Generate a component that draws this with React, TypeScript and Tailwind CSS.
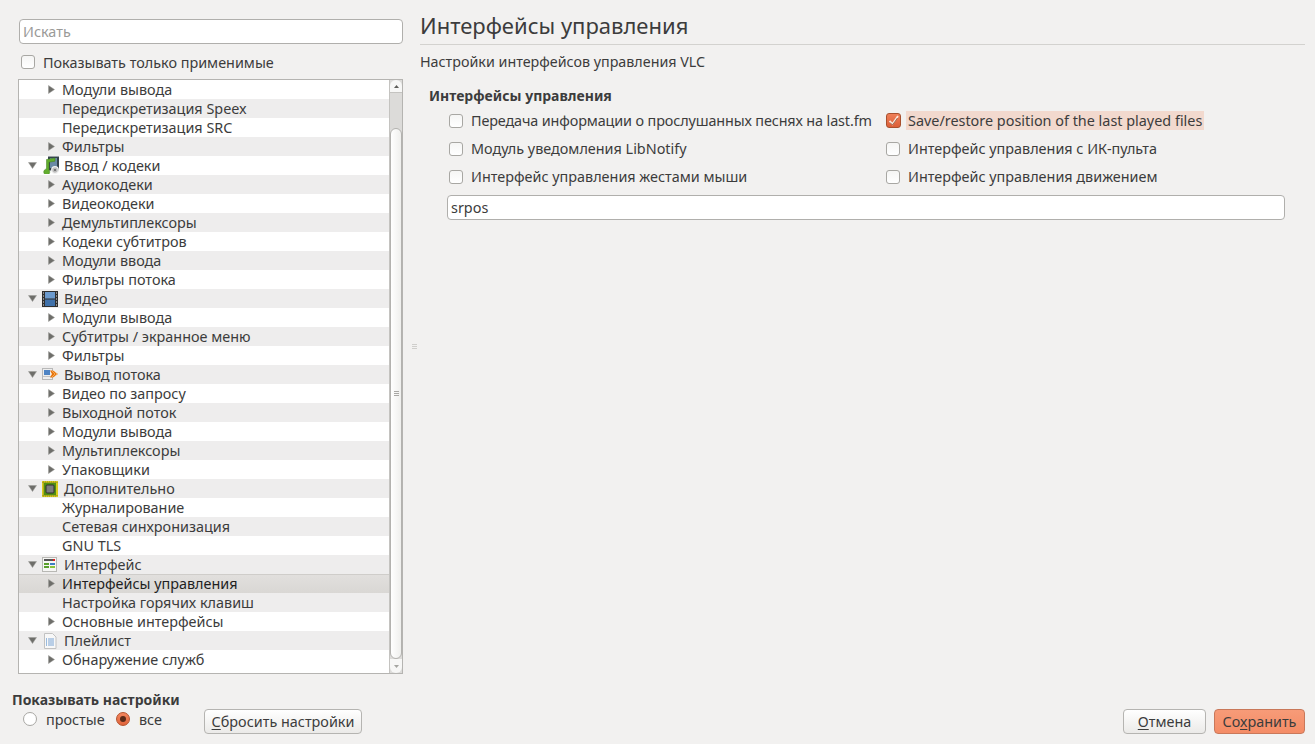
import type { ReactNode } from 'react';

type Row = { label: string; kind: 'top' | 'branch' | 'leaf'; icon?: string; selected?: boolean };

const ROWS: Row[] = [
  { label: 'Модули вывода', kind: 'branch' },
  { label: 'Передискретизация Speex', kind: 'leaf' },
  { label: 'Передискретизация SRC', kind: 'leaf' },
  { label: 'Фильтры', kind: 'branch' },
  { label: 'Ввод / кодеки', kind: 'top', icon: 'codec' },
  { label: 'Аудиокодеки', kind: 'branch' },
  { label: 'Видеокодеки', kind: 'branch' },
  { label: 'Демультиплексоры', kind: 'branch' },
  { label: 'Кодеки субтитров', kind: 'branch' },
  { label: 'Модули ввода', kind: 'branch' },
  { label: 'Фильтры потока', kind: 'branch' },
  { label: 'Видео', kind: 'top', icon: 'video' },
  { label: 'Модули вывода', kind: 'branch' },
  { label: 'Субтитры / экранное меню', kind: 'branch' },
  { label: 'Фильтры', kind: 'branch' },
  { label: 'Вывод потока', kind: 'top', icon: 'stream' },
  { label: 'Видео по запросу', kind: 'branch' },
  { label: 'Выходной поток', kind: 'branch' },
  { label: 'Модули вывода', kind: 'branch' },
  { label: 'Мультиплексоры', kind: 'branch' },
  { label: 'Упаковщики', kind: 'branch' },
  { label: 'Дополнительно', kind: 'top', icon: 'chip' },
  { label: 'Журналирование', kind: 'leaf' },
  { label: 'Сетевая синхронизация', kind: 'leaf' },
  { label: 'GNU TLS', kind: 'leaf' },
  { label: 'Интерфейс', kind: 'top', icon: 'iface' },
  { label: 'Интерфейсы управления', kind: 'branch', selected: true },
  { label: 'Настройка горячих клавиш', kind: 'leaf' },
  { label: 'Основные интерфейсы', kind: 'branch' },
  { label: 'Плейлист', kind: 'top', icon: 'playlist' },
  { label: 'Обнаружение служб', kind: 'branch' },
];

function CategoryIcon({ name }: { name: string }) {
  if (name === 'codec') {
    return (
      <svg width="18" height="18" viewBox="0 0 18 18" className="-mt-px">
        <rect x="6" y="0.500" width="11" height="14" fill="#35424c" />
        <rect x="8" y="2" width="7" height="10" fill="#6a8aa6" />
        <path d="M4.500 13V3.500L13 2v3.200L7 6.200V14a3 3 0 1 1-2.500-1z" fill="#62ad2e" stroke="#3f7f1a" strokeWidth="0.500" />
        <circle cx="13" cy="14" r="3.300" fill="#bdbdbd" stroke="#f1f1f1" strokeWidth="1.200" />
        <circle cx="13" cy="14" r="1.100" fill="#666" />
      </svg>
    );
  }
  if (name === 'video') {
    return (
      <svg width="16" height="16" viewBox="0 0 16 16">
        <rect x="0" y="0" width="16" height="16" fill="#2f2f2f" />
        <rect x="3" y="1" width="10" height="6.500" fill="#6b9ace" />
        <rect x="3" y="8.500" width="10" height="6.500" fill="#3f71aa" />
        <path d="M1 2h1M1 5h1M1 8h1M1 11h1M1 14h1M14 2h1M14 5h1M14 8h1M14 11h1M14 14h1" stroke="#e8e8e8" strokeWidth="1" />
      </svg>
    );
  }
  if (name === 'stream') {
    return (
      <svg width="16" height="16" viewBox="0 0 16 16">
        <rect x="0.500" y="1.500" width="10" height="11" fill="#eeeeee" stroke="#b8b8b8" />
        <rect x="2" y="3" width="6" height="5" fill="#4f84c4" />
        <rect x="1" y="9" width="9" height="1" fill="#c4c4c4" />
        <path d="M8 3.500h3l5 3.500-5 3.500H8l2-3.500z" fill="#e8750c" />
        <path d="M10 4l3 3-3 3M12.500 4.500l2.500 2.500-2.500 2.500" stroke="#f6b66c" strokeWidth="0.800" fill="none" />
      </svg>
    );
  }
  if (name === 'chip') {
    return (
      <svg width="16" height="16" viewBox="0 0 16 16">
        <rect x="0" y="0" width="16" height="16" fill="#d8cc1c" />
        <path d="M1.500 0v16M3.500 0v16M5.500 0v16M7.500 0v16M9.500 0v16M11.500 0v16M13.500 0v16M0 1.500h16M0 14.500h16" stroke="#8d8a20" strokeWidth="0.500" />
        <rect x="2" y="2" width="12" height="12" fill="#4f8f12" />
        <rect x="4" y="4" width="8" height="8" rx="1" fill="#7c7c7c" stroke="#2f2f2f" />
      </svg>
    );
  }
  if (name === 'iface') {
    return (
      <svg width="15" height="15" viewBox="0 0 15 15">
        <rect x="0.500" y="0.500" width="14" height="14" fill="#f6f6f4" stroke="#b8b8b4" />
        <rect x="2" y="2" width="11" height="2" fill="#555" />
        <rect x="11" y="2" width="2" height="2" fill="#e02020" />
        <rect x="2" y="6" width="5" height="2" fill="#5aa02c" />
        <rect x="8" y="6" width="5" height="2" fill="#3d7fc4" />
        <rect x="2" y="9" width="5" height="2" fill="#5aa02c" />
        <rect x="8" y="9" width="5" height="2" fill="#8ac43d" />
      </svg>
    );
  }
  return (
    <svg width="14" height="16" viewBox="0 0 14 16" className="ml-px">
      <path d="M1.500 0.500h8l3.500 3.500v11.500h-11.500z" fill="#f8f8f8" stroke="#c2c2c2" />
      <path d="M3 6h1M3 8h1M3 10h1M3 12h1" stroke="#3d7fc4" strokeWidth="1" />
      <path d="M5 6h6M5 8h6M5 10h6M5 12h6" stroke="#7aa4d4" strokeWidth="1" />
    </svg>
  );
}

function ExpandArrow() {
  return (
    <svg width="7" height="9" viewBox="0 0 7 9" className="block">
      <path d="M0.500 0.500L6.500 4.500L0.500 8.500z" fill="#6e6e6a" stroke="#9a9a96" strokeWidth="0.500" />
    </svg>
  );
}

function CollapseArrow() {
  return (
    <svg width="9" height="7" viewBox="0 0 9 7" className="block">
      <path d="M0.500 0.500H8.500L4.500 6.500z" fill="#6e6e6a" stroke="#9a9a96" strokeWidth="0.500" />
    </svg>
  );
}

function TreeRow({ row, index }: { row: Row; index: number }) {
  const stripe = index % 2 === 1 ? 'bg-[#eeeded]' : 'bg-white';
  if (row.kind === 'top') {
    return (
      <div className={`h-[19px] flex items-center ${stripe}`}>
        <span className="w-[23px] pl-[9px] shrink-0"><CollapseArrow /></span>
        <span className="w-[22px] shrink-0 flex justify-start items-center"><CategoryIcon name={row.icon ?? ''} /></span>
        <span className="whitespace-nowrap">{row.label}</span>
      </div>
    );
  }
  const selected = row.selected
    ? 'bg-gradient-to-b from-[#e2e0de] to-[#d9d7d4] shadow-[inset_0_1px_0_#cfcdca] text-[#1f1f1f]'
    : stripe;
  return (
    <div className={`h-[19px] flex items-center pl-[29px] ${selected}`}>
      <span className="w-[14px] shrink-0">{row.kind === 'branch' && <ExpandArrow />}</span>
      <span className="whitespace-nowrap">{row.label}</span>
    </div>
  );
}

function Scrollbar() {
  return (
    <div className="w-[13px] shrink-0 flex flex-col bg-[#dcdbd9] border-l border-[#c4c3c0]">
      <div className="h-[13px] bg-[#f7f7f6] rounded-t-[7px] flex items-center justify-center border-b border-[#c4c3c0]">
        <svg width="5" height="3" viewBox="0 0 5 3"><path d="M0 3L2.500 0L5 3z" fill="#5e5e5a" /></svg>
      </div>
      <div className="h-[35px]" />
      <div className="h-[531px] rounded-[7px] border border-[#b3b2af] bg-gradient-to-r from-[#ffffff] to-[#efefed] flex flex-col items-center justify-center gap-px">
        <span className="w-[5px] h-px bg-[#a8a7a4]" />
        <span className="w-[5px] h-px bg-[#a8a7a4]" />
        <span className="w-[5px] h-px bg-[#a8a7a4]" />
      </div>
      <div className="flex-1 bg-[#f7f7f6] rounded-b-[7px] flex items-center justify-center">
        <svg width="5" height="3" viewBox="0 0 5 3"><path d="M0 0L2.500 3L5 0z" fill="#a5a5a1" /></svg>
      </div>
    </div>
  );
}

function Checkbox({ checked }: { checked?: boolean }) {
  if (checked) {
    return (
      <span className="w-[15px] h-[15px] shrink-0 rounded-[3px] border border-[#a8502e] bg-gradient-to-b from-[#ee7f58] to-[#dc5f38] flex items-center justify-center">
        <svg width="13" height="13" viewBox="0 0 13 13">
          <path d="M2.500 7L5.500 10L11 2" fill="none" stroke="#fbe9df" strokeWidth="1.800" />
          <path d="M3 8.500L5.500 11L10.500 4" fill="none" stroke="#7a3a20" strokeWidth="0.700" />
        </svg>
      </span>
    );
  }
  return <span className="w-[14px] h-[14px] shrink-0 rounded-[3px] border border-[#a8a7a3] bg-gradient-to-b from-[#f5f5f4] to-white" />;
}

function CheckItem({ label, checked, tight }: { label: string; checked?: boolean; tight?: boolean }) {
  return (
    <div className="flex items-center h-[19px]">
      <Checkbox checked={checked} />
      <span className={`${checked ? 'ml-[5px] bg-[#f2d9ce]' : 'ml-[6px]'} ${tight ? 'tracking-[-0.13px]' : ''} px-[2px] h-[19px] leading-[19px] whitespace-nowrap`}>{label}</span>
    </div>
  );
}

function Button({ children, primary, className }: { children: ReactNode; primary?: boolean; className: string }) {
  const tone = primary
    ? 'border-[#c9785a] bg-gradient-to-b from-[#f79b78] to-[#f48c66]'
    : 'border-[#b5b4b1] bg-gradient-to-b from-white to-[#ebeae8]';
  return (
    <button className={`h-[25px] rounded-[4px] border flex items-center justify-center whitespace-nowrap ${tone} ${className}`}>
      {children}
    </button>
  );
}

export default function App() {
  return (
    <div className="w-[1315px] h-[744px] overflow-hidden flex bg-[#f2f1f0] text-[#3c3c3c] text-[14.4px] leading-[19px] font-['Noto_Sans',sans-serif]">
      {/* Left column */}
      <div className="w-[403px] shrink-0 flex flex-col">
        <div className="ml-[19px] mt-[19px] h-[25px] rounded-[4px] border border-[#b0afac] bg-white flex items-center px-[3px] text-[#9a9a98]">
          Искать
        </div>
        <div className="ml-[21px] mt-[11px] h-[14px] flex items-center">
          <Checkbox />
          <span className="ml-[8px] whitespace-nowrap">Показывать только применимые</span>
        </div>
        <div className="ml-[18px] mt-[10px] h-[595px] flex border border-[#b5b4b1] bg-white">
          <div className="flex-1 min-w-0">
            {ROWS.map((r, i) => <TreeRow key={i} row={r} index={i} />)}
          </div>
          <Scrollbar />
        </div>
        <div className="ml-[12px] mt-[16px] font-bold text-[14px] h-[19px]">Показывать настройки</div>
        <div className="flex items-start ml-[23px]">
          <div className="flex items-center h-[20px]">
            <span className="w-[14px] h-[14px] rounded-full border border-[#a8a7a3] bg-white shrink-0" />
            <span className="ml-[9px] w-[58px] whitespace-nowrap">простые</span>
            <span className="ml-[12px] w-[14px] h-[14px] rounded-full border border-[#b5522c] bg-gradient-to-b from-[#f3865f] to-[#e0633a] shrink-0 flex items-center justify-center">
              <span className="w-[6px] h-[6px] rounded-full bg-[#5a2a18]" />
            </span>
            <span className="ml-[9px] w-[23px] whitespace-nowrap">все</span>
          </div>
          <Button className="ml-[42px] w-[158px]"><span><span className="underline underline-offset-2">С</span>бросить настройки</span></Button>
        </div>
      </div>

      {/* Splitter */}
      <div className="w-[17px] shrink-0 flex flex-col items-center justify-center gap-px pb-[52px] pl-[5px]">
        <span className="w-[5px] h-px bg-[#cfcecb]" />
        <span className="w-[5px] h-px bg-[#cfcecb]" />
        <span className="w-[5px] h-px bg-[#cfcecb]" />
      </div>

      {/* Right column */}
      <div className="flex-1 min-w-0 flex flex-col">
        <div className="mt-[10px] h-[30px] text-[22px] leading-[30px] whitespace-nowrap">Интерфейсы управления</div>
        <div className="mt-[4px] mr-[10px] h-px bg-[#d3d2cf]" />
        <div className="mt-[7px] h-[19px] text-[14.3px] whitespace-nowrap">Настройки интерфейсов управления VLC</div>
        <div className="mt-[15px] ml-[9px] h-[19px] font-bold text-[14px] whitespace-nowrap">Интерфейсы управления</div>
        <div className="mt-[6px] ml-[29px] grid grid-cols-[437px_1fr] gap-y-[9px]">
          <CheckItem tight label="Передача информации о прослушанных песнях на last.fm" />
          <CheckItem label="Save/restore position of the last played files" checked />
          <CheckItem label="Модуль уведомления LibNotify" />
          <CheckItem label="Интерфейс управления с ИК-пульта" />
          <CheckItem label="Интерфейс управления жестами мыши" />
          <CheckItem label="Интерфейс управления движением" />
        </div>
        <div className="mt-[9px] ml-[27px] mr-[30px] h-[25px] rounded-[4px] border border-[#b0afac] bg-white flex items-center px-[3px]">
          srpos
        </div>
        <div className="mt-auto mb-[10px] mr-[10px] flex justify-end gap-[8px]">
          <Button className="w-[83px]"><span><span className="underline underline-offset-2">О</span>тмена</span></Button>
          <Button primary className="w-[91px]"><span>Со<span className="underline underline-offset-2">х</span>ранить</span></Button>
        </div>
      </div>
    </div>
  );
}
